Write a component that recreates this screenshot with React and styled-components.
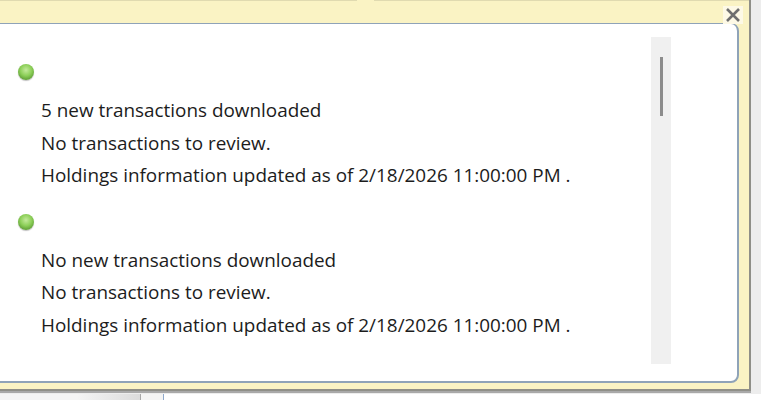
import styled, { createGlobalStyle } from 'styled-components';

const GlobalStyle = createGlobalStyle`
  html, body {
    margin: 0;
    padding: 0;
    background: #fff;
    overflow: hidden;
  }
  body {
    font-family: "Open Sans", "Noto Sans", sans-serif;
  }
`

const accounts = [
  { id: 1, lines: ['5 new transactions downloaded', 'No transactions to review.', 'Holdings information updated as of 2/18/2026 11:00:00 PM .'] },
  { id: 2, lines: ['No new transactions downloaded', 'No transactions to review.', 'Holdings information updated as of 2/18/2026 11:00:00 PM .'] },
]

function Account({ lines }) {
  return (
    <AccountBlock>
      <Dot />
      {lines.map((line, i) => (
        <Line key={i}>{line}</Line>
      ))}
    </AccountBlock>
  )
}

export default function App() {
  return (
    <Page>
      <GlobalStyle />
      <TopRow>
        <Popup>
          <TopEdge>
            <EdgePiece $grow />
            <EdgeGap />
            <EdgePiece />
          </TopEdge>
          <Panel>
            <Content>
              {accounts.map(a => (
                <Account key={a.id} lines={a.lines} />
              ))}
            </Content>
            <Track>
              <Thumb />
            </Track>
          </Panel>
          <CloseButton>
            <svg width="16" height="16" viewBox="0 0 16 16">
              <path d="M2 2 L14 14 M14 2 L2 14" stroke="#6f6f6f" strokeWidth="2.6" fill="none" />
            </svg>
          </CloseButton>
        </Popup>
        <SideGutter />
      </TopRow>
      <Footer>
        <FooterTab />
        <FooterGap />
        <FooterMain />
      </Footer>
    </Page>
  )
}

const Page = styled.div`
  width: 761px;
  height: 400px;
  display: flex;
  flex-direction: column;
  overflow: hidden;
`

const TopRow = styled.div`
  display: flex;
  height: 394px;
  background: #ededed;
`

const Popup = styled.div`
  position: relative;
  width: 751px;
  height: 391px;
  box-sizing: border-box;
  background: #faf3c4;
  border-right: 2px solid #8f8f88;
  border-bottom: 2px solid #8f8f88;
  padding: 0 10px 6px 0;
  display: flex;
  flex-direction: column;
  box-shadow: 0 2px 0 #a9a9a9;
`

const TopEdge = styled.div`
  display: flex;
  height: 1px;
  margin-right: -10px;
  margin-bottom: 22px;
`

const EdgePiece = styled.div`
  flex: ${props => (props.$grow ? '0 0 357px' : '1')};
  background: #e0dab0;
`

const EdgeGap = styled.div`
  width: 17px;
`

const Panel = styled.div`
  flex: 1;
  margin-left: -4px;
  display: flex;
  justify-content: space-between;
  align-items: flex-start;
  background: #fff;
  border-style: solid;
  border-color: #8fa3b8;
  border-width: 1px 2px 2px 1px;
  border-radius: 0 8px 8px 0;
  padding: 13px 66px 17px 0;
`

const Content = styled.div`
  padding: 27px 0 0 13px;
`

const AccountBlock = styled.div`
  margin-bottom: 22px;
`

const Dot = styled.div`
  width: 16px;
  height: 16px;
  margin: 0 0 14px 8px;
  border-radius: 50%;
  background: radial-gradient(circle at 50% 38%, #c4ea9c 0%, #8ccf58 45%, #5f9e36 78%, #8d9a86 100%);
  box-shadow: 0 1px 1px rgba(0, 0, 0, 0.25);
`

const Line = styled.div`
  margin-left: 31px;
  font-size: 18.9px;
  line-height: 32.5px;
  color: #1c1c1c;
  white-space: nowrap;
`

const Track = styled.div`
  width: 20px;
  align-self: stretch;
  background: #f0f0f0;
  padding-top: 20px;
  display: flex;
  justify-content: center;
`

const Thumb = styled.div`
  width: 3px;
  height: 59px;
  background: #8c8c8c;
`

const CloseButton = styled.div`
  position: absolute;
  top: 6px;
  right: 6px;
  width: 20px;
  height: 18px;
  background: #fdf9e6;
  display: flex;
  align-items: center;
  justify-content: center;
`

const SideGutter = styled.div`
  flex: 1;
`

const Footer = styled.div`
  display: flex;
  height: 6px;
`

const FooterTab = styled.div`
  width: 140px;
  background: linear-gradient(90deg, #f5f5f5 55%, #dcdcdc 100%);
  border-right: 1px solid #a8a8a8;
`

const FooterGap = styled.div`
  width: 22px;
  background: #f4f4f4;
  border-right: 1px solid #8fa9cc;
`

const FooterMain = styled.div`
  flex: 1;
  background: #fff;
`
